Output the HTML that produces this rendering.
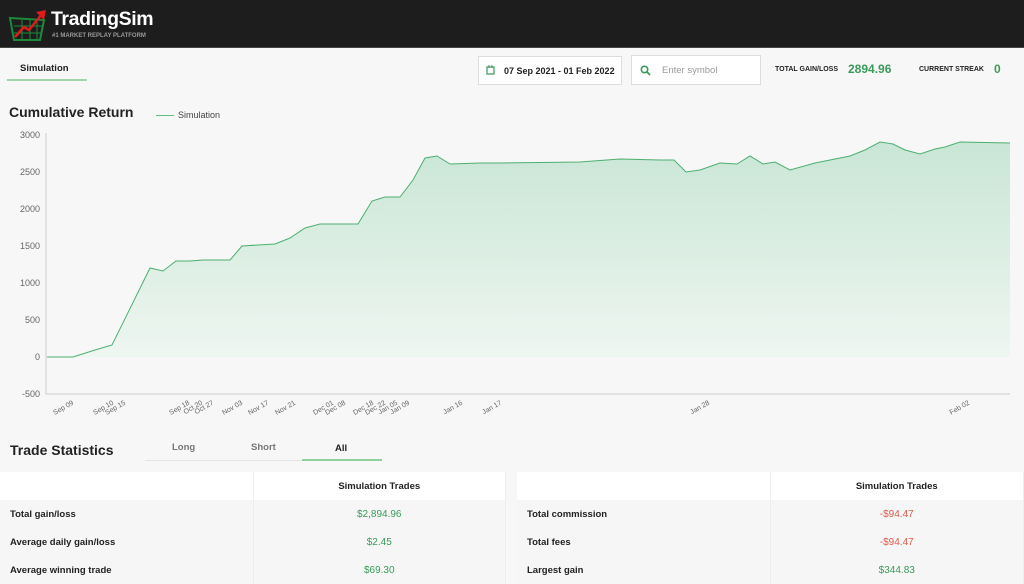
<!DOCTYPE html>
<html><head><meta charset="utf-8"><style>
*{margin:0;padding:0;box-sizing:border-box}
body{width:1024px;height:573px;overflow:hidden;background:#f7f7f7;font-family:"Liberation Sans",Arial,sans-serif;color:#222;position:relative}
.hdr{position:absolute;left:0;top:0;width:1024px;height:48px;background:#1d1d1d;border-bottom:1px solid #444}
.abs{position:absolute}
.box{position:absolute;background:#fff;border:1px solid #ddd}
table{border-collapse:collapse;position:absolute;font-size:10px}
td{height:28px;border-right:1px solid #eee}
tr.h td{background:#fff;font-weight:bold;text-align:center;font-size:9.5px}
tr.b td{background:#f6f6f6}
td.l{padding-left:10px;font-weight:bold;font-size:9.5px;width:253px}
td.v{text-align:center}
.g{color:#3a9a5a}.r{color:#e05a4a}
</style></head><body>
<div class="hdr">
 <svg class="abs" style="left:8px;top:8px" width="42" height="34" viewBox="0 0 42 34">
  <path d="M2 10 L36 12 L32 32 L6 32 Z" fill="none" stroke="#1c8a3a" stroke-width="2"/>
  <path d="M6 18 H34 M6 25 H33 M14 12 V32 M22 12 V32 M29 12 V32" stroke="#1c8a3a" stroke-width="1"/>
  <path d="M7 29 L16 19 L21 22 L34 6" fill="none" stroke="#e01b1b" stroke-width="2.5"/>
  <path d="M28 4 L38 2 L36 12 Z" fill="#e01b1b"/>
 </svg>
 <div class="abs" style="left:51px;top:8px;color:#fff;font-size:19.5px;font-weight:bold;letter-spacing:-0.4px">TradingSim</div>
 <div class="abs" style="left:52px;top:33px;color:#999;font-size:6px;font-weight:bold">#1 MARKET REPLAY PLATFORM</div>
</div>
<div class="abs" style="left:20px;top:63px;font-size:9.5px;font-weight:bold">Simulation</div>
<div class="abs" style="left:7px;top:79px;width:80px;height:2px;background:#9fd6a8"></div>
<div class="box" style="left:478px;top:56px;width:144px;height:29px">
 <svg class="abs" style="left:7px;top:8px" width="9" height="10"><rect x="1" y="2" width="7" height="7" fill="none" stroke="#3a9a5a" stroke-width="1.2"/><path d="M3 0V3M6 0V3" stroke="#3a9a5a"/></svg>
 <div class="abs" style="left:25px;top:9px;font-size:9px;font-weight:bold">07 Sep 2021 - 01 Feb 2022</div>
</div>
<div class="box" style="left:631px;top:55px;width:130px;height:30px">
 <svg class="abs" style="left:8px;top:9px" width="11" height="11"><circle cx="4.5" cy="4.5" r="3.2" fill="none" stroke="#3a9a5a" stroke-width="1.6"/><path d="M7 7L10 10" stroke="#3a9a5a" stroke-width="1.8"/></svg>
 <div class="abs" style="left:30px;top:9px;font-size:9.5px;color:#999">Enter symbol</div>
</div>
<div class="abs" style="left:775px;top:66px;font-size:7px;font-weight:bold">TOTAL GAIN/LOSS</div>
<div class="abs" style="left:848px;top:62px;font-size:12px;font-weight:bold;color:#3a9a5a">2894.96</div>
<div class="abs" style="left:919px;top:66px;font-size:7px;font-weight:bold">CURRENT STREAK</div>
<div class="abs" style="left:994px;top:62px;font-size:12px;font-weight:bold;color:#3a9a5a">0</div>
<div class="abs" style="left:9px;top:104px;font-size:14px;font-weight:bold">Cumulative Return</div>
<div class="abs" style="left:156px;top:115px;width:18px;height:1px;background:#5bbf7f"></div>
<div class="abs" style="left:178px;top:110px;font-size:9px;color:#444">Simulation</div>
<svg class="abs" style="left:0;top:125px" width="1024" height="295" viewBox="0 125 1024 295">
 <defs><linearGradient id="gr" x1="0" y1="0" x2="0" y2="1"><stop offset="0" stop-color="#c9e6d5"/><stop offset="1" stop-color="#eef6f1"/></linearGradient></defs>
 <g font-size="9" fill="#666" text-anchor="end" font-family="Liberation Sans">
  <text x="40" y="138">3000</text><text x="40" y="175">2500</text><text x="40" y="212">2000</text><text x="40" y="249">1500</text><text x="40" y="286">1000</text><text x="40" y="323">500</text><text x="40" y="360">0</text><text x="40" y="397">-500</text>
 </g>
 <path d="M46 133V394H1010" fill="none" stroke="#ccc"/>
 <path d="M47 357L73 357L95 350L112 345L150 268L163 271L176 261L190 261L203 260L230 260L242 246L258 245L275 244L290 238L305 228L320 224L340 224L358 224L372 201L385 197L400 197L413 180L425 158L437 156L450 164L480 163L500 163L580 162L620 159L660 160L674 160L686 172L700 170L720 163L737 164L750 156L763 164L775 162L790 170L815 163L850 156L865 150L880 142L893 144L905 150L920 154L935 149L945 147L960 142L1010 143L1010 357L47 357Z" fill="url(#gr)"/>
 <path d="M47 357L73 357L95 350L112 345L150 268L163 271L176 261L190 261L203 260L230 260L242 246L258 245L275 244L290 238L305 228L320 224L340 224L358 224L372 201L385 197L400 197L413 180L425 158L437 156L450 164L480 163L500 163L580 162L620 159L660 160L674 160L686 172L700 170L720 163L737 164L750 156L763 164L775 162L790 170L815 163L850 156L865 150L880 142L893 144L905 150L920 154L935 149L945 147L960 142L1010 143" fill="none" stroke="#4caf6f" stroke-width="1"/>
 <g font-size="7" fill="#666" font-family="Liberation Sans" text-anchor="end">
  <text transform="translate(74,404) rotate(-30)">Sep 09</text>
  <text transform="translate(114,404) rotate(-30)">Sep 10</text>
  <text transform="translate(126,404) rotate(-30)">Sep 15</text>
  <text transform="translate(190,404) rotate(-30)">Sep 18</text>
  <text transform="translate(203,404) rotate(-30)">Oct 20</text>
  <text transform="translate(214,404) rotate(-30)">Oct 27</text>
  <text transform="translate(243,404) rotate(-30)">Nov 03</text>
  <text transform="translate(269,404) rotate(-30)">Nov 17</text>
  <text transform="translate(296,404) rotate(-30)">Nov 21</text>
  <text transform="translate(334,404) rotate(-30)">Dec 01</text>
  <text transform="translate(346,404) rotate(-30)">Dec 08</text>
  <text transform="translate(374,404) rotate(-30)">Dec 18</text>
  <text transform="translate(386,404) rotate(-30)">Dec 22</text>
  <text transform="translate(398,404) rotate(-30)">Jan 05</text>
  <text transform="translate(410,404) rotate(-30)">Jan 09</text>
  <text transform="translate(463,404) rotate(-30)">Jan 16</text>
  <text transform="translate(502,404) rotate(-30)">Jan 17</text>
  <text transform="translate(710,404) rotate(-30)">Jan 28</text>
  <text transform="translate(970,404) rotate(-30)">Feb 02</text>
 </g>
</svg>
<div class="abs" style="left:10px;top:442px;font-size:14px;font-weight:bold">Trade Statistics</div>
<div class="abs" style="left:145px;top:460px;width:237px;height:1px;background:#e4e4e4"></div>
<div class="abs" style="left:302px;top:459px;width:80px;height:2px;background:#8fd19e"></div>
<div class="abs" style="left:172px;top:442px;font-size:9.5px;color:#777;font-weight:bold">Long</div>
<div class="abs" style="left:251px;top:442px;font-size:9.5px;color:#777;font-weight:bold">Short</div>
<div class="abs" style="left:335px;top:443px;font-size:9.5px;font-weight:bold">All</div>
<table style="left:0;top:472px;width:506px">
 <tr class="h"><td style="width:253px"></td><td>Simulation Trades</td></tr>
 <tr class="b"><td class="l">Total gain/loss</td><td class="v g">$2,894.96</td></tr>
 <tr class="b"><td class="l">Average daily gain/loss</td><td class="v g">$2.45</td></tr>
 <tr class="b"><td class="l">Average winning trade</td><td class="v g">$69.30</td></tr>
</table>
<table style="left:517px;top:472px;width:507px">
 <tr class="h"><td style="width:253px"></td><td>Simulation Trades</td></tr>
 <tr class="b"><td class="l">Total commission</td><td class="v r">-$94.47</td></tr>
 <tr class="b"><td class="l">Total fees</td><td class="v r">-$94.47</td></tr>
 <tr class="b"><td class="l">Largest gain</td><td class="v g">$344.83</td></tr>
</table>
</body></html>
